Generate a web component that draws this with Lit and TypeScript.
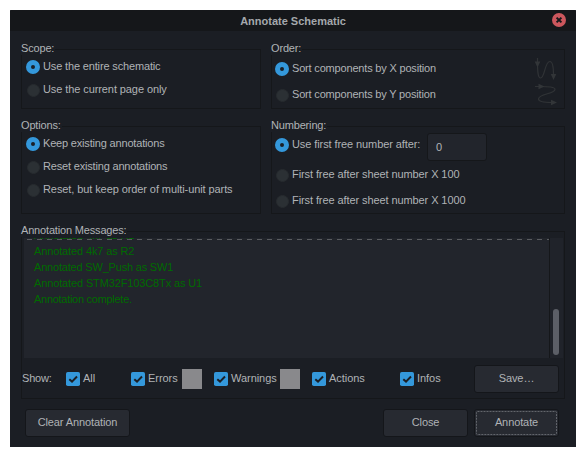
import { LitElement, html, css, svg } from "lit";
import { customElement, property } from "lit/decorators.js";
import { classMap } from "lit/directives/class-map.js";

@customElement("radio-item")
class RadioItem extends LitElement {
  @property({ type: Boolean }) checked = false;
  static styles = css`
    :host { display: flex; align-items: center; height: 14px; }
    .dot { box-sizing: border-box; flex: none; width: 13px; height: 13px; margin: 0 3px 0 1px; border-radius: 50%; background: #2b3034; border: 1px solid #272b2f; }
    .dot.on { width: 14px; height: 14px; margin: 0 3px 0 0; border: 5px solid #3498db; background: #1b1f25; }
    .text { white-space: nowrap; line-height: 14px; position: relative; top: -1px; }
  `;
  render() {
    return html`<span class=${classMap({ dot: true, on: this.checked })}></span><span class="text"><slot></slot></span>`;
  }
}

@customElement("check-item")
class CheckItem extends LitElement {
  static styles = css`
    :host { display: flex; align-items: center; height: 14px; }
    svg { flex: none; margin-right: 3px; display: block; }
    .text { white-space: nowrap; line-height: 14px; position: relative; top: -1px; }
  `;
  render() {
    return html`<svg width="14" height="14" viewBox="0 0 14 14">
        <rect width="14" height="14" rx="1.8" fill="#3498db" />
        <path d="M3.3 7.2 L6 9.6 L11 4.5" fill="none" stroke="#1b1f25" stroke-width="2" />
      </svg><span class="text"><slot></slot></span>`;
  }
}

@customElement("group-box")
class GroupBox extends LitElement {
  @property() label = "";
  static styles = css`
    :host { display: block; box-sizing: border-box; border: 1px solid #15171a; }
    .legend { display: block; width: max-content; height: 14px; line-height: 14px; margin: -9px 0 0 -1px; padding-right: 1px; background: #1b1e24; white-space: nowrap; letter-spacing: -0.17px; }
  `;
  render() {
    return html`<span class="legend">${this.label}</span><slot></slot>`;
  }
}

const arrows = svg`
  <path d="M2.5 0 V4 C2.5 14 3 20 5.5 20 C10 20 9.5 3.5 15 3.5 C18 3.5 18.5 9 18.5 17" />
  <path class="head" d="M-.3 3.5 H5.3 L2.5 9.5 Z M15.7 16 H21.3 L18.5 22 Z" />`;

@customElement("app-root")
class AppRoot extends LitElement {
  static styles = css`
    :host { display: block; box-sizing: border-box; width: 586px; height: 457px; padding: 10px; background: #fff; font: 11px "Liberation Sans", Arial, sans-serif; color: #b0b3b6; overflow: hidden; }
    .dialog { display: flex; flex-direction: column; width: 566px; height: 437px; background: #1b1e24; border-radius: 1px 1px 0 0; }
    .title { display: grid; grid-template-columns: 27px 1fr 27px; align-items: center; height: 21px; background: #15171a; color: #a4a8ac; font-weight: bold; text-align: center; border-radius: 1px 1px 0 0; }
    .title svg { display: block; margin-left: 3px; margin-top: -1px; }
    .body { display: grid; grid-template-columns: 240px 294px; column-gap: 10px; padding: 18px 11px 0; grid-template-rows: 60px 88px 168px; row-gap: 17px; }
    .stack { display: flex; flex-direction: column; gap: 9px; padding: 5px 0 0 4px; }
    .wide { gap: 12px; padding: 7px 0 0 3px; }
    .tight { letter-spacing: -0.18px; }
    .snug { letter-spacing: -0.15px; }
    .loose { letter-spacing: -0.09px; }
    .split { display: flex; justify-content: space-between; }
    .icons { display: flex; flex-direction: column; gap: 3px; width: 24px; padding: 3px 5px 0 0; }
    .icons svg { display: block; fill: none; stroke: #303336; stroke-width: 1.2; overflow: visible; }
    .icons .head { fill: #323538; stroke: none; }
    .numbering { display: flex; flex-direction: column; padding: 1px 0 0 3px; }
    .numbering radio-item + radio-item { margin-top: 12px; }
    .first { display: flex; align-items: center; height: 28px; margin-bottom: 7px; }
    .first radio-item { width: 152px; margin-top: -4px; }
    .field { box-sizing: border-box; width: 60px; height: 28px; line-height: 26px; padding-left: 8px; border: 1px solid #15171a; border-radius: 3px; background: #22252c; }
    .messages { grid-column: 1 / 3; }
    .log { display: flex; width: 539px; height: 120px; margin: 1px 0 0 2px; background: #22252c; }
    .lines { position: relative; box-sizing: border-box; width: 525px; overflow: hidden; color: #006b00; line-height: 16px; letter-spacing: -0.13px; }
    .lines p { margin: 0 0 0 10px; }
    .lines p:first-child { margin-top: -11px; }
    .lines p:nth-child(3) { letter-spacing: -0.19px; }
    .lines p:nth-child(5) { letter-spacing: -0.28px; }
    .dash { position: absolute; left: 0; top: 1px; width: 525px; height: 1px; background: repeating-linear-gradient(90deg, #202328 0 3px, #5a5c60 3px 8px, #202328 8px 10px); }
    .bar { box-sizing: border-box; width: 14px; border-left: 1px solid #15171a; padding: 71px 4px 0 3px; background: #20232a; }
    .thumb { width: 6px; height: 46px; border-radius: 3px; background: #5c5f67; }
    .filters { display: flex; align-items: center; margin-top: 7px; height: 28px; letter-spacing: -0.04px; }
    .show { width: 44px; line-height: 14px; margin-top: -2px; letter-spacing: -0.2px; }
    .w1 { width: 65px; } .w2 { width: 51px; } .w3 { width: 66px; } .w4 { width: 88px; } .w5 { width: 74px; }
    .swatch { width: 20px; height: 20px; background: #89898c; margin-right: 12px; }
    .button { box-sizing: border-box; display: block; text-align: center; width: 85px; height: 28px; line-height: 25px; border: 1px solid #14161a; border-radius: 3px; background: #272a31; letter-spacing: -0.1px; }
    .actions { display: flex; padding: 10px 17px 0 15px; }
    .clear { width: 105px; margin-right: auto; }
    .close { margin-right: 6px; }
    .focus { position: relative; }
    .ring { position: absolute; left: 1px; top: 1px; overflow: visible; fill: none; stroke: #62656b; stroke-dasharray: 2 1; }
  `;
  render() {
    return html`
      <div class="dialog">
        <div class="title">
          <span></span><span>Annotate Schematic</span>
          <svg width="14" height="14" viewBox="0 0 14 14"><circle cx="7" cy="7" r="7" fill="#cc575d" /><path d="M4.6 4.6 L9.4 9.4 M9.4 4.6 L4.6 9.4" stroke="#15171a" stroke-width="2" /></svg>
        </div>
        <div class="body">
          <group-box label="Scope:">
            <div class="stack"><radio-item class="snug" checked>Use the entire schematic</radio-item><radio-item class="loose">Use the current page only</radio-item></div>
          </group-box>
          <group-box label="Order:">
            <div class="split">
              <div class="stack wide"><radio-item class="tight" checked>Sort components by X position</radio-item><radio-item class="tight">Sort components by Y position</radio-item></div>
              <div class="icons">
                <svg width="22" height="23" viewBox="0 0 22 23">${arrows}</svg>
                <svg width="22" height="22" viewBox="0 0 22 22"><g transform="matrix(0 1 1 0 0 0)">${arrows}</g></svg>
              </div>
            </div>
          </group-box>
          <group-box label="Options:">
            <div class="stack"><radio-item class="tight" checked>Keep existing annotations</radio-item><radio-item class="tight">Reset existing annotations</radio-item><radio-item class="loose">Reset, but keep order of multi-unit parts</radio-item></div>
          </group-box>
          <group-box label="Numbering:">
            <div class="numbering">
              <div class="first"><radio-item class="loose" checked>Use first free number after:</radio-item><span class="field">0</span></div>
              <radio-item class="loose">First free after sheet number X 100</radio-item>
              <radio-item class="loose">First free after sheet number X 1000</radio-item>
            </div>
          </group-box>
          <group-box class="messages" label="Annotation Messages:">
            <div class="log">
              <div class="lines"><p>Annotated 4k7 as R1</p><p>Annotated 4k7 as R2</p><p>Annotated SW_Push as SW1</p><p>Annotated STM32F103C8Tx as U1</p><p>Annotation complete.</p><div class="dash"></div></div>
              <div class="bar"><div class="thumb"></div></div>
            </div>
            <div class="filters">
              <span class="show">Show:</span>
              <check-item class="w1">All</check-item>
              <check-item class="w2">Errors</check-item><span class="swatch"></span>
              <check-item class="w3">Warnings</check-item><span class="swatch"></span>
              <check-item class="w4">Actions</check-item>
              <check-item class="w5">Infos</check-item>
              <span class="button">Save…</span>
            </div>
          </group-box>
        </div>
        <div class="actions">
          <span class="button clear">Clear Annotation</span><span class="button close">Close</span>
          <span class="button focus">Annotate<svg class="ring" width="81" height="24"><rect x="0.5" y="0.5" width="80" height="23" rx="1" /></svg></span>
        </div>
      </div>`;
  }
}
